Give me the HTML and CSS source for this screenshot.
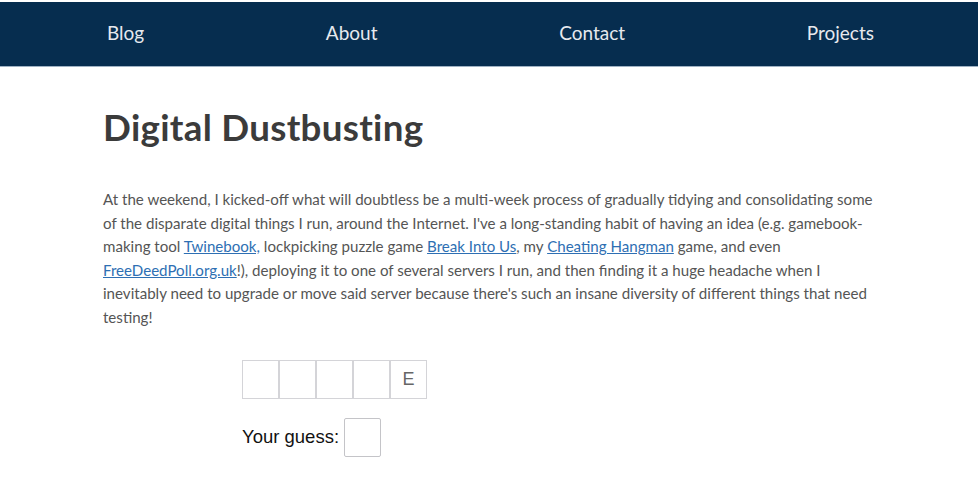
FILE: index.html
```html
<!doctype html>
<html lang="en">
  <head>
    <meta charset="UTF-8" />
    <meta name="viewport" content="width=device-width, initial-scale=1.0" />
    <title>Digital Dustbusting</title>
    <link rel="stylesheet" href="styles.css">
  </head>
  <body>
    <header class="site-header">
      <nav class="nav">
        <a href="#">Blog</a>
        <a href="#">About</a>
        <a href="#">Contact</a>
        <a href="#">Projects</a>
      </nav>
    </header>

    <main class="content">
      <h1>Digital Dustbusting</h1>

      <p>
        At the weekend, I kicked-off what will doubtless be a multi-week process of gradually tidying and consolidating some
        of the disparate digital things I run, around the Internet. I've a long-standing habit of having an idea (e.g. gamebook-making
        tool <a href="#">Twinebook,</a> lockpicking puzzle game <a href="#">Break Into Us</a>, my <a href="#">Cheating Hangman</a> game, and even
        <a href="#">FreeDeedPoll.org.uk</a>!), deploying it to one of several servers I run, and then finding it a huge headache when I
        inevitably need to upgrade or move said server because there's such an insane diversity of different things that need
        testing!
      </p>

      <div class="hangman">
        <div class="letters">
          <span class="letter"></span>
          <span class="letter"></span>
          <span class="letter"></span>
          <span class="letter"></span>
          <span class="letter">E</span>
        </div>
        <label class="guess">Your guess: <input type="text" maxlength="1"></label>
      </div>
    </main>
  </body>
</html>
```

FILE: styles.css
```css
body {
  margin: 0;
  font-family: Lato, "Open Sans", sans-serif;
  color: #444;
  background: #fff;
}

.site-header {
  margin-top: 2px;
  background: #062d4f;
  border-bottom: 1px solid #9fb2c4;
}
.nav {
  display: flex;
  justify-content: space-between;
  align-items: center;
  height: 61px;
  width: 767px;
  margin: 0 auto;
  padding: 0 0 3px 3px;
}
.nav a {
  color: #e6e9ee;
  text-decoration: none;
  font-size: 19px;
}

.content {
  width: 772px;
  margin: 0 auto;
}
.content h1 {
  margin: 38px 0 0;
  font-size: 36.7px;
  font-weight: 700;
  color: #3b3b3b;
  letter-spacing: 0.3px;
}
.content p {
  margin: 39px 0 0;
  font-size: 15.1px;
  line-height: 23.6px;
  color: #555;
}
.content p a {
  color: #2e6fb3;
}

.hangman {
  margin: 30px 0 0 139px;
  font-family: "Liberation Sans", Arial, sans-serif;
}
.letters {
  display: flex;
}
.letter {
  width: 35px;
  height: 37px;
  border: 1px solid #d4d4d8;
  display: flex;
  align-items: center;
  justify-content: center;
  font-size: 18px;
  color: #666;
}
.guess {
  display: flex;
  align-items: center;
  margin-top: 19px;
  font-size: 18.5px;
  color: #111;
}
.guess input {
  width: 35px;
  height: 37px;
  margin-left: 5px;
  padding: 0;
  border: 1px solid #c4c4c8;
  border-radius: 2px;
}
```
